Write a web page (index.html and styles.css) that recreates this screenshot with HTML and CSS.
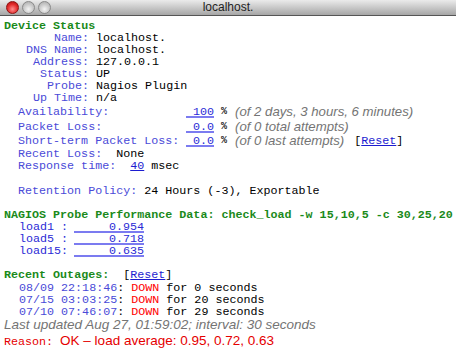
FILE: index.html
```html
<!DOCTYPE html>
<html lang="en">
<head>
    <meta charset="UTF-8">
    <title>localhost.</title>
    <link rel="stylesheet" href="styles.css">
</head>
<body>
    <div class="titlebar">
        <div class="lights">
            <span class="light red"></span>
            <span class="light"></span>
            <span class="light"></span>
        </div>
        <div class="title">localhost.</div>
        <div></div>
    </div>

    <div class="content">
        <div class="heading">Device Status</div>
        <div class="info">
            <div class="row"><span class="lbl">Name:</span><span class="val">localhost.</span></div>
            <div class="row"><span class="lbl">DNS Name:</span><span class="val">localhost.</span></div>
            <div class="row"><span class="lbl">Address:</span><span class="val">127.0.0.1</span></div>
            <div class="row"><span class="lbl">Status:</span><span class="val">UP</span></div>
            <div class="row"><span class="lbl">Probe:</span><span class="val">Nagios Plugin</span></div>
            <div class="row"><span class="lbl">Up Time:</span><span class="val">n/a</span></div>
        </div>

        <div class="metrics">
            <div class="metric">
                <span class="lbl">Availability:</span>
                <span class="num">100</span>
                <span class="pct">%</span>
                <span class="note">(of 2 days, 3 hours, 6 minutes)</span>
            </div>
            <div class="metric">
                <span class="lbl">Packet Loss:</span>
                <span class="num">0.0</span>
                <span class="pct">%</span>
                <span class="note">(of 0 total attempts)</span>
            </div>
            <div class="metric short">
                <span class="lbl">Short-term Packet Loss:</span>
                <span class="num">0.0</span>
                <span class="pct">%</span>
                <span class="note">(of 0 last attempts)</span>
                <span class="reset">[<a href="#">Reset</a>]</span>
            </div>
            <div class="line"><span class="blue">Recent Loss:</span>  None</div>
            <div class="line"><span class="blue">Response time:</span>  <a class="link" href="#">40</a> msec</div>
            <div class="line gap"><span class="blue">Retention Policy:</span> 24 Hours (-3), Exportable</div>
        </div>

        <div class="heading gap">NAGIOS Probe Performance Data: check_load -w 15,10,5 -c 30,25,20</div>
        <div class="perf">
            <div class="prow"><span class="plbl">load1 :</span><span class="pval">0.954</span></div>
            <div class="prow"><span class="plbl">load5 :</span><span class="pval">0.718</span></div>
            <div class="prow"><span class="plbl">load15:</span><span class="pval">0.635</span></div>
        </div>

        <div class="heading gap">Recent Outages:  <span class="reset">[<a href="#">Reset</a>]</span></div>
        <div class="outages">
            <div class="line"><span class="blue">08/09 22:18:46</span>: <span class="down">DOWN</span> for 0 seconds</div>
            <div class="line"><span class="blue">07/15 03:03:25</span>: <span class="down">DOWN</span> for 20 seconds</div>
            <div class="line"><span class="blue">07/10 07:46:07</span>: <span class="down">DOWN</span> for 29 seconds</div>
        </div>

        <div class="updated">Last updated Aug 27, 01:59:02; interval: 30 seconds</div>
        <div class="reason">Reason: <span class="reason-text">OK – load average: 0.95, 0.72, 0.63</span></div>
    </div>
</body>
</html>
```

FILE: styles.css
```css
* {
    margin: 0;
    padding: 0;
    box-sizing: border-box;
}

body {
    width: 456px;
    height: 349px;
    overflow: hidden;
    background: #fff;
    color: #000;
    font-family: "Liberation Mono", "Courier New", monospace;
    font-size: 11.7px;
    line-height: 12px;
}

/* 窗口标题栏 */
.titlebar {
    height: 16px;
    display: grid;
    grid-template-columns: 1fr auto 1fr;
    align-items: center;
    background: linear-gradient(#ebebeb, #a6a6a6);
    border-bottom: 1px solid #555;
}

.lights {
    display: flex;
    gap: 3px;
    padding-left: 6px;
}

.light {
    width: 13px;
    height: 13px;
    border-radius: 50%;
    border: 1px solid #8a8a8a;
    background: radial-gradient(circle at 50% 65%, #f4f4f4, #c4c4c4 60%, #a9a9a9);
}

.light.red {
    border-color: #8d1313;
    background: radial-gradient(circle at 50% 65%, #ff8f8f, #e22a2a 55%, #a30e0e);
}

.title {
    font-family: "Liberation Sans", Arial, sans-serif;
    font-size: 12px;
    line-height: 15px;
    color: #1e1e1e;
}

/* 内容区域 */
.content {
    padding: 4px 0 0 4px;
}

.heading,
.line,
.row,
.metric,
.prow,
.updated,
.reason {
    white-space: pre;
}

.heading {
    color: #1a8a1a;
    font-weight: bold;
}

.gap {
    margin-top: 12px;
}

.line.gap {
    margin-top: 13px;
}

.blue,
.info .lbl,
.metric .lbl {
    color: #4a4ad8;
}

.row {
    display: flex;
}

.info .lbl {
    width: 85px;
    text-align: right;
}

.info .val {
    margin-left: 7px;
}

.metrics {
    margin-top: 2px;
    padding-left: 14px;
}

.metric {
    display: flex;
    align-items: flex-start;
    height: 14.5px;
}

.metric.short {
    height: 12.5px;
}

.metric .lbl {
    width: 168px;
}

.num,
.pval {
    height: 12px;
    text-align: right;
    color: #2b2bd6;
    border-bottom: 2px solid #7b7bf0;
}

.num {
    width: 28px;
}

.pct {
    margin-left: 7px;
    font-size: 10px;
    font-weight: bold;
    color: #222;
}

.note {
    margin-left: 8px;
    font-family: "Liberation Sans", Arial, sans-serif;
    font-style: italic;
    font-size: 13.2px;
    color: #747474;
}

.reset {
    margin-left: 10px;
    color: #000;
    font-weight: normal;
}

.heading .reset {
    margin-left: 0;
}

a,
.link {
    color: #1c1cd0;
    text-decoration: underline;
}

.perf,
.outages {
    padding-left: 15px;
}

.outages {
    margin-top: 1px;
}

.prow {
    display: flex;
    align-items: flex-start;
}

.plbl {
    width: 55px;
    color: #2b2bd6;
}

.pval {
    width: 70px;
}

.down {
    color: #f00;
}

.updated {
    font-family: "Liberation Sans", Arial, sans-serif;
    font-style: italic;
    font-size: 13.5px;
    line-height: 14px;
    color: #747474;
}

.reason {
    margin-top: 2px;
    line-height: 14px;
    color: #e50000;
}

.reason-text {
    font-family: "Liberation Sans", Arial, sans-serif;
    font-size: 13.5px;
}
```
